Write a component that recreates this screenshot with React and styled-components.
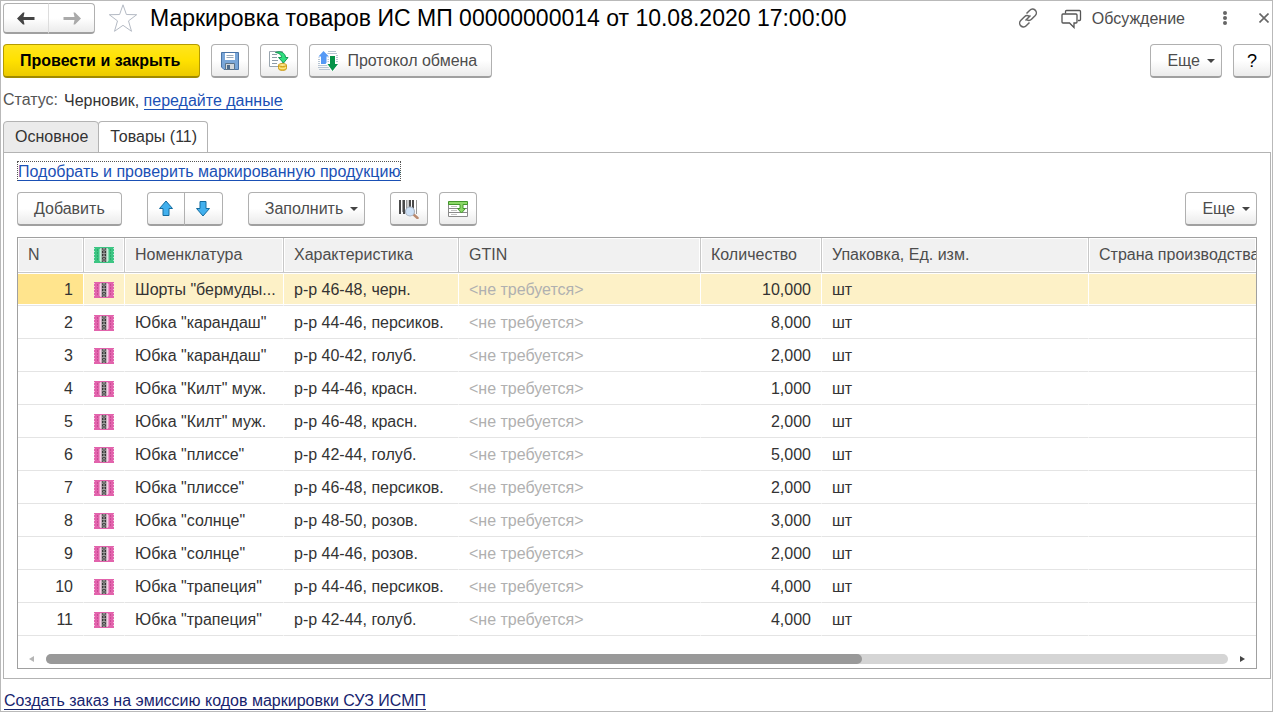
import { useState } from "react";
import styled, { createGlobalStyle, css } from "styled-components";

const GlobalStyle = createGlobalStyle`
  *,
  *::before,
  *::after {
    box-sizing: border-box;
  }

  html,
  body,
  #root {
    height: 100%;
  }

  body {
    margin: 0;
    background: #fff;
    color: #333;
    font-family: "Liberation Sans", Arial, sans-serif;
    font-size: 16px;
    line-height: 20px;
  }

  button {
    font: inherit;
    color: inherit;
  }

  svg {
    flex-shrink: 0;
  }
`;

const Window = styled.div`
  display: flex;
  flex-direction: column;
  min-height: 100%;
  padding: 2px 1px 0 2px;
  border: 1px solid #b9b9b9;
`;

const TitleBar = styled.header`
  display: flex;
  align-items: center;
  height: 31px;
`;

const Title = styled.h1`
  flex: 1;
  margin: 0 0 0 12px;
  padding-bottom: 2px;
  color: #000;
  font-size: 23px;
  font-weight: 400;
  line-height: 28px;
  white-space: nowrap;
`;

const IconButton = styled.button`
  display: flex;
  align-items: center;
  padding: 0;
  border: 0;
  background: none;
  color: #555;
`;

const FavoriteButton = styled(IconButton)`
  margin-left: 13px;
`;

const TitleActions = styled.div`
  display: flex;
  align-items: center;
  padding-bottom: 2px;
`;

const Discussion = styled(IconButton)`
  gap: 10px;
  margin: 0 38px 0 23px;
  padding-top: 3px;
  color: #4d4d4d;
`;

const WindowButtons = styled.div`
  display: flex;
  align-items: center;
  gap: 32px;
  padding-right: 2px;
`;

const Button = styled.button`
  display: flex;
  align-items: center;
  justify-content: center;
  gap: 8px;
  height: 34px;
  padding: 0 16px;
  border: 1px solid #b0b0b0;
  border-bottom: 2px solid #a0a0a0;
  border-radius: 4px;
  background: linear-gradient(#fff 50%, #ebebeb);
  color: #4d4d4d;
  white-space: nowrap;

  ${(props) =>
    props.$square &&
    css`
      width: 38px;
      padding: 0;
    `}

  ${(props) =>
    props.$menu &&
    css`
      gap: 7px;
      padding-right: 6px;

      svg {
        margin-top: 2px;
      }
    `}

  ${(props) =>
    props.$primary &&
    css`
      padding-right: 19px;
      border-color: #b49b00;
      border-bottom-color: #a08a00;
      background: linear-gradient(#ffe51f, #ffe100 50%, #ecca00);
      color: #000;
      font-weight: 700;
    `}
`;

const ProtocolButton = styled(Button)`
  gap: 9px;
  padding: 0 14px 0 8px;
`;

const HelpSign = styled.span`
  color: #000;
  font-size: 18px;
`;

const ButtonPair = styled.div`
  display: flex;

  ${Button}:first-child {
    border-radius: 4px 0 0 4px;
  }

  ${Button}:last-child {
    width: 39px;
    margin-left: -1px;
    border-radius: 0 4px 4px 0;
  }

  ${(props) =>
    props.$wide &&
    css`
      ${Button} {
        width: 46px;
        height: 31px;
        padding: 0;
      }

      ${Button}:last-child {
        width: 47px;
        border-left-color: #ddd;
      }
    `}
`;

const CommandBar = styled.div`
  display: flex;
  gap: 11px;
  margin-top: 10px;
`;

const Spacer = styled.div`
  flex: 1;
`;

const Status = styled.div`
  display: flex;
  gap: 6px;
  margin-top: 12px;
`;

const StatusLabel = styled.span`
  color: #555;
`;

const StatusText = styled.span`
  padding-top: 1px;
`;

const Link = styled.a`
  display: inline-block;
  border-bottom: 1px solid currentColor;
  color: ${(props) => (props.$dark ? "#17246e" : "#1a50b5")};
  line-height: 17px;
  text-decoration: none;
`;

const FocusFrame = styled.div`
  align-self: flex-start;
  height: 20px;
  border: 1px dotted #555;
`;

const Tabs = styled.div`
  display: flex;
  margin-top: 10px;
`;

const Tab = styled.button`
  height: 32px;
  margin-bottom: -1px;
  padding: 0 10px 0 11px;
  border: 1px solid #b3b3b3;
  border-radius: 4px 4px 0 0;
  background: #ebebeb;

  & + & {
    margin-left: -1px;
  }

  &[aria-selected="true"] {
    border-bottom-color: #fff;
    background: #fff;
  }
`;

const Panel = styled.section`
  display: flex;
  flex: 1;
  flex-direction: column;
  min-width: 0;
  padding: 8px 13px 9px;
  border: 1px solid #b3b3b3;
`;

const Toolbar = styled.div`
  display: flex;
  gap: 25px;
  margin: 11px 0;
`;

const ToolGroup = styled.div`
  display: flex;
  gap: 11px;
`;

const Grid = styled.div`
  display: flex;
  flex: 1;
  flex-direction: column;
  overflow: hidden;
  border: 1px solid #a0a0a0;
`;

const Table = styled.table`
  width: 100%;
  border-spacing: 0;
  table-layout: fixed;
`;

const Col = styled.col`
  width: ${(props) => props.$width || "auto"};
`;

const Th = styled.th`
  height: 35px;
  padding: 0 0 0 10px;
  overflow: hidden;
  border-right: 1px solid #c8c8c8;
  border-bottom: 1px solid #c8c8c8;
  background: #f1f1f1;
  box-shadow: inset 0 0 0 1px #fff;
  color: #4d4d4d;
  font-weight: 400;
  text-align: left;
  white-space: nowrap;

  &:last-child {
    border-right: 0;
  }
`;

const Td = styled.td`
  height: 33px;
  padding: 2px ${(props) => (props.$number ? "10px" : "2px")} 0 10px;
  overflow: hidden;
  border-bottom: 1px solid #e4e4e4;
  color: ${(props) => (props.$muted ? "#b0b0b0" : "#333")};
  text-align: ${(props) => (props.$number ? "right" : "left")};
  text-overflow: ellipsis;
  white-space: nowrap;

  &:not(:last-child) {
    border-right: 1px solid #fff;
  }
`;

const Tr = styled.tr`
  ${(props) =>
    props.$selected &&
    css`
      ${Td} {
        background: #fdf1c7;
        box-shadow: inset 0 1px #fff, inset 0 -1px #fff;
      }

      ${Td}:first-child {
        background: #ffe48d;
      }
    `}
`;

const ScrollBar = styled.div`
  display: flex;
  align-items: center;
  gap: 12px;
  margin-top: auto;
  padding: 0 11px 4px;
`;

const ScrollTrack = styled.div`
  flex: 1;
  height: 10px;
  border-radius: 5px;
  background: #d5d5d5;
`;

const ScrollThumb = styled.div`
  width: 69%;
  height: 100%;
  border-radius: 5px;
  background: #999;
`;

const Footer = styled.footer`
  padding: 12px 1px 0;
`;

const items = [
  ['Шорты "бермуды...', "р-р 46-48, черн.", "10,000"],
  ['Юбка "карандаш"', "р-р 44-46, персиков.", "8,000"],
  ['Юбка "карандаш"', "р-р 40-42, голуб.", "2,000"],
  ['Юбка "Килт" муж.', "р-р 44-46, красн.", "1,000"],
  ['Юбка "Килт" муж.', "р-р 46-48, красн.", "2,000"],
  ['Юбка "плиссе"', "р-р 42-44, голуб.", "5,000"],
  ['Юбка "плиссе"', "р-р 46-48, персиков.", "2,000"],
  ['Юбка "солнце"', "р-р 48-50, розов.", "3,000"],
  ['Юбка "солнце"', "р-р 44-46, розов.", "2,000"],
  ['Юбка "трапеция"', "р-р 44-46, персиков.", "4,000"],
  ['Юбка "трапеция"', "р-р 42-44, голуб.", "4,000"],
];

const columnWidths = ["66px", "41px", "159px", "175px", "242px", "121px", "267px", ""];

function NavArrow({ color, flip }) {
  return (
    <svg width="18" height="13" viewBox="0 0 18 13">
      <path
        d="M0 6.500L6 .5h1.500L6.500 5H17.500v3H6.500l1 4.500H6z"
        fill={color}
        transform={flip ? "matrix(-1 0 0 1 18 0)" : undefined}
      />
    </svg>
  );
}

function StarIcon() {
  return (
    <svg width="30" height="29" viewBox="0 0 30 29">
      <path
        d="M15 .8l3.400 9.700 10.300.2-8.200 6.200 3 10.400L15 21.300l-8.500 6 3-10.400-8.200-6.200 10.300-.2z"
        fill="#fff"
        stroke="#b4bac4"
      />
    </svg>
  );
}

function LinkIcon() {
  return (
    <svg width="20" height="20" viewBox="0 0 20 20" fill="none" stroke="#666" strokeWidth="1.500">
      <path d="M8.500 5.500l3.300-3.200a3.700 3.700 0 0 1 5.500 5.200L13.500 11.300a3.700 3.700 0 0 1-4.500.6" />
      <path d="M11.500 14.500l-3.300 3.200a3.700 3.700 0 0 1-5.500-5.200L6.500 8.700a3.700 3.700 0 0 1 4.500-.6M7.500 12.500l5-5" />
    </svg>
  );
}

function ChatIcon() {
  return (
    <svg width="21" height="20" viewBox="0 0 21 20" fill="none" stroke="#555" strokeWidth="1.300">
      <path d="M4.500 4.500V2.500q0-1 1-1H18.500q1 0 1 1V10.500q0 1-1 1H17" />
      <path d="M2 5H15q1 0 1 1v7q0 1-1 1h-2v4.500L8.500 14H2q-1 0-1-1V6q0-1 1-1z" />
    </svg>
  );
}

function DotsIcon() {
  return (
    <svg width="4" height="16" viewBox="0 0 4 16" fill="#666">
      <circle cx="2" cy="3" r="2" />
      <circle cx="2" cy="8" r="2" />
      <circle cx="2" cy="13" r="2" />
    </svg>
  );
}

function CloseIcon() {
  return (
    <svg width="10" height="10" viewBox="0 0 10 10" stroke="#666" strokeWidth="1.600">
      <path d="M.5.5l9 9M9.500.5l-9 9" />
    </svg>
  );
}

function CaretIcon() {
  return (
    <svg width="8" height="5" viewBox="0 0 8 5">
      <path d="M0 0h8L4 4z" fill="#444" />
    </svg>
  );
}

function SaveIcon() {
  return (
    <svg width="18" height="18" viewBox="0 0 18 18">
      <path d="M.5.5h17v17H3l-2.500-2.500z" fill="#79a6d8" stroke="#4a74a6" />
      <path d="M4 1h10v7H4z" fill="#fff" />
      <path d="M5.500 3.500h7M5.500 5.500h7" stroke="#9aaabb" />
      <path d="M4.500 11.500h9v6h-9z" fill="#d3d8dc" stroke="#5b7288" />
      <path d="M6 13h3v4H6z" fill="#4d6c8c" />
    </svg>
  );
}

function PostIcon() {
  return (
    <svg width="20" height="20" viewBox="0 0 20 20">
      <path d="M.5.5h13v15H.5z" fill="#fff" stroke="#9aa5ae" />
      <path d="M3 3.500h5M3 6.500h5M3 9.500h6M3 12.500h5" stroke="#8d9ba8" />
      <path
        d="M6.500 1.500C11.500-.5 16.500 2 16.500 6.500h2.500l-4.500 5.500-5-5.500h3c0-2.500-2-4.500-6-5z"
        fill="#2fe07f"
        stroke="#159653"
      />
      <path d="M9.500 14v3.500c0 2.500 8 2.500 8 0V14" fill="#f0c93c" stroke="#c99a1b" />
      <ellipse cx="13.500" cy="14" rx="4" ry="1.500" fill="#ffe98a" stroke="#c99a1b" />
      <path d="M10 16c0 2 7 2 7 0" fill="none" stroke="#fff0a0" />
    </svg>
  );
}

function ExchangeIcon() {
  return (
    <svg width="20" height="20" viewBox="0 0 20 20">
      <path
        d="M10 .5h8M9 2.500h10M0 6.500h20M0 8.500h20M0 10.500h20M0 12.500h20M0 14.500h11M0 16.500h11M1 18.500h11M17 4.500h3"
        stroke="#b7c5d3"
      />
      <path
        d="M5.500 0L11 5.500H8.500V13h-5.500V5.500H.5z"
        fill="#5599f5"
        stroke="#fff"
        strokeWidth="2"
        paintOrder="stroke"
      />
      <path
        d="M12 5h5v8h3l-5.500 7L9.500 13H12z"
        fill="#059348"
        stroke="#fff"
        strokeWidth="2"
        paintOrder="stroke"
      />
    </svg>
  );
}

function MoveIcon({ down }) {
  return (
    <svg width="16" height="17" viewBox="0 0 16 17">
      <path
        d="M8 1l6.500 7.500h-3.500v7H5v-7H1.500z"
        fill="#42b0ee"
        stroke="#146c9f"
        transform={down ? "rotate(180 8 8.500)" : undefined}
      />
    </svg>
  );
}

function BarcodeIcon() {
  return (
    <svg width="20" height="20" viewBox="0 0 20 20">
      <path d="M1 1v14M5 1v14M11 1v13M14 1v12" stroke="#4a4a4a" strokeWidth="2" />
      <path d="M3.500 1v12M7.500 1v12M9 1v8M17.500 1v14" stroke="#999" />
      <path d="M14 15l4.500 4" stroke="#ba8b70" strokeWidth="2.500" strokeLinecap="round" />
      <circle cx="11" cy="12.500" r="4.500" fill="#cfe2f7" stroke="#a9b3c0" strokeWidth="1.200" />
    </svg>
  );
}

function InsertRowsIcon() {
  return (
    <svg width="20" height="16" viewBox="0 0 20 16">
      <path d="M.5 1v14.500h19V1M1 7.500h18M1 11.500h18" fill="#fff" stroke="#8a8a8a" />
      <path d="M3 5.500h6M3 9.500h6M3 13.500h6" stroke="#c2c2c2" />
      <path
        d="M.5.5h19v3h-4.500v4h2.500L13.500 12l-4-4.500H12v-4H.5z"
        fill="#8bd867"
        stroke="#43962c"
      />
    </svg>
  );
}

function MarkIcon({ color, dark }) {
  return (
    <svg width="20" height="16" viewBox="0 0 20 16">
      <path d="M0 0h20v16H0z" fill={color} />
      <path d="M.5 1v14M19.500 1v14" stroke="#fff" strokeDasharray="1 2" opacity=".6" />
      <path d="M3.500 2v12M16.500 2v12" stroke={dark} strokeDasharray="2 1" opacity=".6" />
      <path d="M5 2h10v12H5z" fill="#fff" opacity=".35" />
      <path d="M6 1h8v14H6z" fill="#fff" opacity=".55" />
      <path d="M7.500 1h5v14h-5z" fill="#8f8f8f" />
      <path
        d="M8 1.500l4 3.500-4 3 4 3.500-4 3M12 1.500L8 5l4 3-4 3.500 4 3"
        fill="none"
        stroke="#2e2e2e"
      />
      <path d="M9.500 3h1M9.500 6.500h1M9.500 9.500h1M9.500 13h1" stroke="#fff" />
    </svg>
  );
}

function ScrollArrow({ right }) {
  return (
    <svg width="5" height="6" viewBox="0 0 5 6">
      <path d={right ? "M0 0l5 3-5 3z" : "M5 0L0 3l5 3z"} fill={right ? "#444" : "#b5b5b5"} />
    </svg>
  );
}

function ItemsTable() {
  const [selected, setSelected] = useState(0);

  return (
    <Table>
      <colgroup>
        {columnWidths.map((width, i) => (
          <Col key={i} $width={width} />
        ))}
      </colgroup>
      <thead>
        <tr>
          <Th>N</Th>
          <Th aria-label="Маркировка">
            <IconButton as="span">
              <MarkIcon color="#3cc583" dark="#249b60" />
            </IconButton>
          </Th>
          <Th>Номенклатура</Th>
          <Th>Характеристика</Th>
          <Th>GTIN</Th>
          <Th>Количество</Th>
          <Th>Упаковка, Ед. изм.</Th>
          <Th>Страна производства</Th>
        </tr>
      </thead>
      <tbody>
        {items.map(([name, feature, quantity], i) => (
          <Tr key={i} $selected={i === selected} onClick={() => setSelected(i)}>
            <Td $number>{i + 1}</Td>
            <Td>
              <IconButton as="span">
                <MarkIcon color="#e263ac" dark="#bd3c87" />
              </IconButton>
            </Td>
            <Td>{name}</Td>
            <Td>{feature}</Td>
            <Td $muted>&lt;не требуется&gt;</Td>
            <Td $number>{quantity}</Td>
            <Td>шт</Td>
            <Td />
          </Tr>
        ))}
      </tbody>
    </Table>
  );
}

function App() {
  const [tab, setTab] = useState("goods");

  return (
    <>
      <GlobalStyle />
      <Window>
        <TitleBar>
          <ButtonPair $wide>
            <Button aria-label="Назад">
              <NavArrow color="#444" />
            </Button>
            <Button aria-label="Вперед">
              <NavArrow color="#aaa" flip />
            </Button>
          </ButtonPair>
          <FavoriteButton aria-label="В избранное">
            <StarIcon />
          </FavoriteButton>
          <Title>Маркировка товаров ИС МП 00000000014 от 10.08.2020 17:00:00</Title>
          <TitleActions>
            <IconButton aria-label="Получить ссылку">
              <LinkIcon />
            </IconButton>
            <Discussion>
              <ChatIcon />
              Обсуждение
            </Discussion>
            <WindowButtons>
              <IconButton aria-label="Действия">
                <DotsIcon />
              </IconButton>
              <IconButton aria-label="Закрыть">
                <CloseIcon />
              </IconButton>
            </WindowButtons>
          </TitleActions>
        </TitleBar>

        <CommandBar>
          <Button $primary>Провести и закрыть</Button>
          <Button $square aria-label="Записать">
            <SaveIcon />
          </Button>
          <Button $square aria-label="Провести">
            <PostIcon />
          </Button>
          <ProtocolButton>
            <ExchangeIcon />
            Протокол обмена
          </ProtocolButton>
          <Spacer />
          <Button $menu>
            Еще
            <CaretIcon />
          </Button>
          <Button $square>
            <HelpSign>?</HelpSign>
          </Button>
        </CommandBar>

        <Status>
          <StatusLabel>Статус:</StatusLabel>
          <StatusText>
            Черновик, <Link href="#send">передайте данные</Link>
          </StatusText>
        </Status>

        <Tabs role="tablist">
          <Tab role="tab" aria-selected={tab === "main"} onClick={() => setTab("main")}>
            Основное
          </Tab>
          <Tab role="tab" aria-selected={tab === "goods"} onClick={() => setTab("goods")}>
            Товары (11)
          </Tab>
        </Tabs>

        <Panel role="tabpanel">
          <FocusFrame>
            <Link href="#check">Подобрать и проверить маркированную продукцию</Link>
          </FocusFrame>
          <Toolbar>
            <Button>Добавить</Button>
            <ButtonPair>
              <Button $square aria-label="Вверх">
                <MoveIcon />
              </Button>
              <Button $square aria-label="Вниз">
                <MoveIcon down />
              </Button>
            </ButtonPair>
            <Button $menu>
              Заполнить
              <CaretIcon />
            </Button>
            <ToolGroup>
              <Button $square aria-label="Поиск по штрихкоду">
                <BarcodeIcon />
              </Button>
              <Button $square aria-label="Загрузить строки">
                <InsertRowsIcon />
              </Button>
            </ToolGroup>
            <Spacer />
            <Button $menu>
              Еще
              <CaretIcon />
            </Button>
          </Toolbar>

          <Grid>
            <ItemsTable />
            <ScrollBar aria-hidden="true">
              <ScrollArrow />
              <ScrollTrack>
                <ScrollThumb />
              </ScrollTrack>
              <ScrollArrow right />
            </ScrollBar>
          </Grid>
        </Panel>

        <Footer>
          <Link $dark href="#order">
            Создать заказ на эмиссию кодов маркировки СУЗ ИСМП
          </Link>
        </Footer>
      </Window>
    </>
  );
}

export default App;
